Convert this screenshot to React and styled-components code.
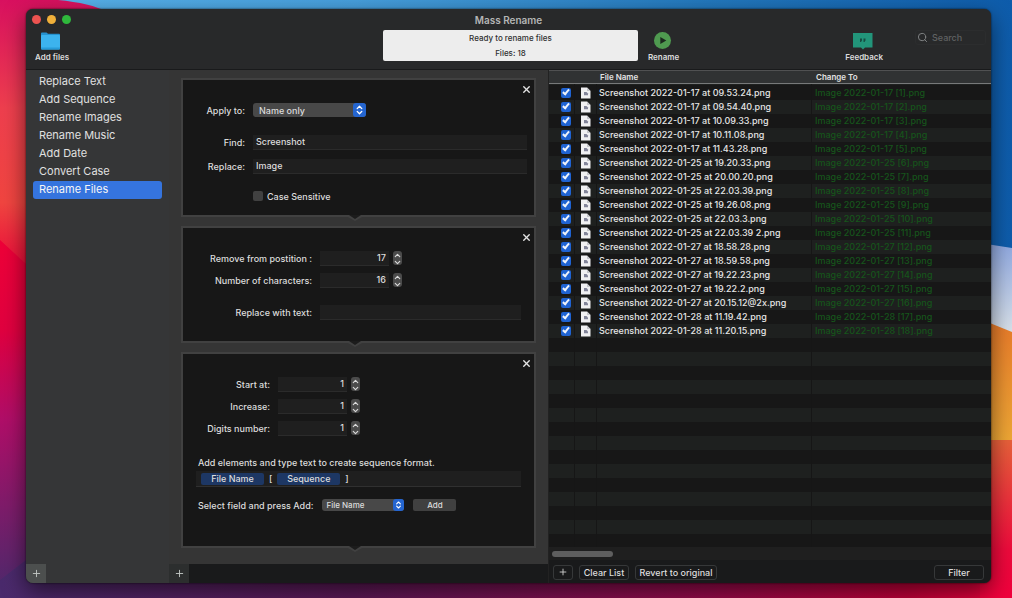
import React, { useState } from 'react';
import styled, { createGlobalStyle } from 'styled-components';
import { ChevronDown, ChevronUp, ChevronsUpDown, Plus, Search, X } from 'lucide-react';

const GlobalStyle = createGlobalStyle`
  * {
    box-sizing: border-box;
  }

  body {
    margin: 0;
    font-family: Inter, 'Liberation Sans', sans-serif;
    font-size: 9px;
    font-weight: 500;
    color: #dcdcdc;
  }

  button,
  input,
  select {
    margin: 0;
    padding: 0;
    border: 0;
    background: none;
    color: inherit;
    font: inherit;
  }
`;

const Desktop = styled.div`
  position: relative;
  display: flex;
  min-height: 100vh;
  padding: 9px 21px 15px 26px;
  overflow: hidden;
`;

const WallpaperSvg = styled.svg`
  position: absolute;
  inset: 0;
  width: 100%;
  height: 100%;
`;

const Window = styled.main`
  position: relative;
  flex: 1;
  min-width: 0;
  display: flex;
  flex-direction: column;
  border-radius: 7px;
  overflow: hidden;
  background: #353637;
  box-shadow: 0 0 2px rgba(0, 0, 0, 0.8), 0 8px 22px rgba(0, 0, 0, 0.55);
`;

const Header = styled.header`
  background: #28292a;
  border-bottom: 1px solid #191a1b;
`;

const TitleBar = styled.div`
  display: grid;
  grid-template-columns: 1fr auto 1fr;
  align-items: center;
  height: 21px;
  padding: 0 6px;
`;

const Lights = styled.div`
  display: flex;
  gap: 6px;
`;

const Light = styled.button`
  width: 9px;
  height: 9px;
  border-radius: 50%;
  background: ${props => props.color};
`;

const Title = styled.h1`
  margin: 0;
  font-size: 10px;
  font-weight: 600;
  color: #b4b5b5;
`;

const Toolbar = styled.div`
  display: grid;
  grid-template-columns: 1fr 255px 1fr;
  height: 39px;
  padding: 0 5px 0 9px;
`;

const Status = styled.div`
  height: 31px;
  padding-top: 1px;
  border-radius: 2px;
  background: #ededed;
  color: #303030;
  font-size: 8px;
  line-height: 15px;
  text-align: center;
`;

const ToolGroup = styled.div`
  display: flex;
  align-items: flex-start;
  padding-left: ${props => (props.$indent ? 10 : 0)}px;
`;

const ToolButton = styled.button`
  display: flex;
  flex-direction: column;
  align-items: center;
  margin-left: ${props => (props.$pushed ? 'auto' : 0)};
  font-size: 8px;
  font-weight: 600;
  line-height: 12px;
  white-space: nowrap;

  svg {
    width: 22px;
    height: 21px;
  }
`;

const SearchBox = styled.label`
  display: flex;
  align-items: center;
  gap: 4px;
  width: 71px;
  height: 15px;
  margin-left: 32px;
  padding-left: 1px;
  border: 1px solid #2c2d2e;
  border-radius: 3px;
  color: #87898a;

  svg {
    flex: none;
  }

  input {
    width: 100%;
    min-width: 0;
  }

  input::placeholder {
    color: #606263;
  }
`;

const Body = styled.div`
  flex: 1;
  display: grid;
  grid-template-columns: 143px 380px minmax(0, 1fr);
`;

const Sidebar = styled.nav`
  display: flex;
  flex-direction: column;
  justify-content: space-between;
  padding-top: 3px;
  background: #353637;
`;

const ModeList = styled.ul`
  margin: 0;
  padding: 0 7px;
  list-style: none;
`;

const ModeButton = styled.button`
  display: block;
  width: 100%;
  height: 18px;
  padding: 0 6px 1px;
  border-radius: 3px;
  background: ${props => (props.$active ? '#3574de' : 'transparent')};
  color: ${props => (props.$active ? '#f6f6f6' : '#e0e0e0')};
  font-size: 11px;
  font-weight: 400;
  line-height: 17px;
  text-align: left;
`;

const AddButton = styled.button`
  display: grid;
  place-items: center;
  width: 20px;
  height: 19px;
  background: ${props => (props.$dim ? '#2c2e2e' : '#4c4f4e')};
  color: #c2c6c3;
`;

const Steps = styled.section`
  display: flex;
  flex-direction: column;
  background: #353535;
  border-right: 1px solid #222;
`;

const StepList = styled.div`
  flex: 1;
  display: flex;
  flex-direction: column;
  gap: 9px;
  padding: 8px 12px 15px;
`;

const StepsFooter = styled.div`
  height: 19px;
  background: #191a1b;
`;

const CardBox = styled.div`
  position: relative;
  padding-bottom: ${props => props.$bottom}px;
  border: 2px solid #414141;
  background: #171717;
`;

const Notch = styled.svg`
  position: absolute;
  left: calc(50% - 15px);
  bottom: -6px;
  width: 22px;
  height: 6px;
`;

const CardHead = styled.div`
  display: flex;
  justify-content: flex-end;
  height: 22px;
  padding: 3px 1px;
`;

const CloseButton = styled.button`
  display: grid;
  place-items: center;
  width: 13px;
  height: 13px;
  color: #e4e4e4;
`;

const Row = styled.div`
  display: grid;
  grid-template-columns: ${props => props.$label}px minmax(0, 1fr);
  column-gap: 8px;
  align-items: center;
  height: 16px;
  margin-top: ${props => props.$gap || 0}px;
  padding-right: ${props => (props.$wide ? 7 : 13)}px;
`;

const Label = styled.label`
  text-align: right;
  white-space: nowrap;
`;

const Field = styled.input`
  width: ${props => (props.$short ? '69px' : '100%')};
  height: 15px;
  padding: 0 3px;
  background: #1f1f1f;
  border-bottom: 1px solid #2b2b2b;
  text-align: ${props => (props.$short ? 'right' : 'left')};
`;

const Controls = styled.div`
  display: flex;
  align-items: center;
  gap: 4px;
`;

const StepperBox = styled.span`
  display: flex;
  flex-direction: column;
  width: 9px;
  height: 14px;
  border-radius: 3px;
  background: #4b4b4b;

  button {
    display: grid;
    place-items: center;
    height: 7px;
  }
`;

const SelectBox = styled.span`
  display: grid;
  grid-template-columns: minmax(0, 1fr) auto;
  align-items: center;
  width: ${props => (props.$small ? 82 : 113)}px;
  height: ${props => (props.$small ? 12 : 14)}px;
  border-radius: 3px;
  background: #484848;
  font-size: ${props => (props.$small ? 8 : 9)}px;

  select {
    grid-area: 1 / 1 / 2 / 3;
    height: 100%;
    padding: 0 14px 0 ${props => (props.$small ? 4 : 6)}px;
    appearance: none;
  }

  svg {
    grid-area: 1 / 2;
    width: ${props => (props.$small ? 11 : 13)}px;
    height: 100%;
    padding: 1px;
    border-radius: 3px;
    background: #2465d0;
    color: #fff;
    pointer-events: none;
  }
`;

const TickLabel = styled.label`
  display: flex;
  align-items: center;
  gap: 4px;
`;

const Tick = styled.input`
  display: block;
  width: 10px;
  height: 10px;
  border-radius: 2px;
  background: #414141;
  appearance: none;

  &:checked {
    background: #1f63d2;
  }

  &:checked::after {
    content: '';
    display: block;
    width: 2px;
    height: 5px;
    margin-left: 3px;
    border: solid #eef3fb;
    border-width: 0 2px 2px 0;
    transform: rotate(40deg);
  }
`;

const Sequence = styled.div`
  margin-top: 19px;
  padding: 0 13px;
`;

const Hint = styled.div`
  padding-left: 2px;
  line-height: 16px;
`;

const TokenField = styled.div`
  display: flex;
  align-items: center;
  gap: 5px;
  height: 16px;
  padding: 0 5px;
  background: #1f1f1f;
  border-bottom: 1px solid #303030;
`;

const Token = styled.span`
  width: 63px;
  border-radius: 2px;
  background: #1d3764;
  line-height: 12px;
  text-align: center;
`;

const AddRow = styled.div`
  display: flex;
  align-items: center;
  gap: 9px;
  height: 16px;
  margin-top: 10px;
  padding-left: 2px;
`;

const SmallButton = styled.button`
  width: 43px;
  height: 12px;
  border-radius: 2px;
  background: #404040;
  font-size: 8px;
`;

const Files = styled.section`
  display: flex;
  flex-direction: column;
  min-width: 0;
  background: #191a1b;
`;

const List = styled.div`
  flex: 1;
  background:
    linear-gradient(#161616, #161616) 25px 0 / 1px 100% no-repeat,
    linear-gradient(#161616, #161616) 47px 0 / 1px 100% no-repeat,
    linear-gradient(#161616, #161616) 262px 0 / 1px 100% no-repeat,
    repeating-linear-gradient(#171717 0 14px, #1e201f 14px 28px) 0 16px;
`;

const Table = styled.table`
  width: 100%;
  table-layout: fixed;
  border-collapse: separate;
  border-spacing: 0;

  th {
    height: 14px;
    padding: 0 4px;
    border-top: 1px solid #505152;
    border-bottom: 1px solid #77797a;
    background: #303233;
    color: #e2e2e2;
    font-size: 8px;
    font-weight: 600;
    line-height: 12px;
    text-align: left;
  }

  td {
    height: 14px;
    padding: 0 3px;
    line-height: 14px;
    white-space: nowrap;
    overflow: hidden;
  }

  td:first-child {
    padding-left: 12px;
  }

  td:nth-child(2) {
    padding-left: 7px;
  }

  td svg {
    display: block;
  }

  tbody::before {
    content: '';
    display: block;
    height: 2px;
  }
`;

const NameCell = styled.td`
  color: ${props => (props.$renamed ? '#16541b' : '#e6e6e6')};
`;

const ScrollTrack = styled.div`
  height: 13px;
  padding: 4px 3px;
  background: #1f1f1f;
`;

const ScrollThumb = styled.div`
  width: 61px;
  height: 6px;
  border-radius: 3px;
  background: #5f5f5f;
`;

const FilesFooter = styled.footer`
  display: flex;
  align-items: center;
  gap: 6px;
  height: 23px;
  padding: 1px 7px 0 4px;
`;

const FooterButton = styled.button`
  display: grid;
  place-items: center;
  width: ${props => props.$width}px;
  height: 15px;
  margin-left: ${props => (props.$end ? 'auto' : 0)};
  border: 1px solid #363839;
  border-radius: 3px;
  white-space: nowrap;
`;

const modes = [
  'Replace Text',
  'Add Sequence',
  'Rename Images',
  'Rename Music',
  'Add Date',
  'Convert Case',
  'Rename Files',
];

const shots = [
  '2022-01-17 at 09.53.24',
  '2022-01-17 at 09.54.40',
  '2022-01-17 at 10.09.33',
  '2022-01-17 at 10.11.08',
  '2022-01-17 at 11.43.28',
  '2022-01-25 at 19.20.33',
  '2022-01-25 at 20.00.20',
  '2022-01-25 at 22.03.39',
  '2022-01-25 at 19.26.08',
  '2022-01-25 at 22.03.3',
  '2022-01-25 at 22.03.39 2',
  '2022-01-27 at 18.58.28',
  '2022-01-27 at 18.59.58',
  '2022-01-27 at 19.22.23',
  '2022-01-27 at 19.22.2',
  '2022-01-27 at 20.15.12@2x',
  '2022-01-28 at 11.19.42',
  '2022-01-28 at 11.20.15',
];

const Wallpaper = () => (
  <WallpaperSvg viewBox="0 0 1012 598" preserveAspectRatio="none" aria-hidden="true">
    <defs>
      <linearGradient id="sky" x1="0" x2="1">
        <stop offset="0" stopColor="#5ab4ec" />
        <stop offset="0.35" stopColor="#479fdc" />
        <stop offset="0.7" stopColor="#2378bd" />
        <stop offset="1" stopColor="#0e5cab" />
      </linearGradient>
      <linearGradient id="coral" x1="0" x2="0" y1="0" y2="1">
        <stop offset="0" stopColor="#d8105f" />
        <stop offset="0.4" stopColor="#ee3f4e" />
        <stop offset="0.75" stopColor="#f04540" />
        <stop offset="1" stopColor="#ea0a3a" />
      </linearGradient>
      <linearGradient id="berry" x1="0" x2="0" y1="0" y2="1">
        <stop offset="0" stopColor="#ee0038" />
        <stop offset="0.25" stopColor="#e0003f" />
        <stop offset="0.5" stopColor="#b00e68" />
        <stop offset="1" stopColor="#4a2a6c" />
      </linearGradient>
      <linearGradient id="floor" x1="0" x2="1">
        <stop offset="0" stopColor="#4a2a6c" />
        <stop offset="0.35" stopColor="#5c1856" />
        <stop offset="0.7" stopColor="#960a4a" />
        <stop offset="0.9" stopColor="#c00038" />
        <stop offset="1" stopColor="#f0003c" />
      </linearGradient>
      <linearGradient id="mist" x1="0" x2="0" y1="0" y2="1">
        <stop offset="0" stopColor="#8fa8e0" />
        <stop offset="1" stopColor="#dfe6ea" />
      </linearGradient>
      <linearGradient id="sand" x1="0" x2="0" y1="0" y2="1">
        <stop offset="0" stopColor="#e87a2a" />
        <stop offset="1" stopColor="#eeaa36" />
      </linearGradient>
      <linearGradient id="ember" x1="0" x2="0" y1="0" y2="1">
        <stop offset="0" stopColor="#e8613a" />
        <stop offset="0.7" stopColor="#ee0a3c" />
        <stop offset="1" stopColor="#f0003c" />
      </linearGradient>
    </defs>
    <rect width="1012" height="598" fill="url(#sky)" />
    <path d="M0 0H58Q90 3 108 12L200 270H0Z" fill="url(#coral)" />
    <path d="M0 240L26 264L60 290V598H0Z" fill="url(#berry)" />
    <path d="M26 560H1012V598H0V580Z" fill="url(#floor)" />
    <path d="M980 243L1012 248V340H980Z" fill="url(#mist)" />
    <path d="M980 319L1012 332V450H980Z" fill="url(#sand)" />
    <path d="M980 440H1012V598H980Z" fill="url(#ember)" />
  </WallpaperSvg>
);

const FolderIcon = () => (
  <svg viewBox="0 0 22 21" aria-hidden="true">
    <path d="M0 3.5Q0 2.500 1 2.500H5.500L7 3.700H18Q19 3.700 19 4.700V8H0Z" fill="#2592cf" />
    <rect x="0" y="5" width="19" height="14.500" rx="1" fill="#3cb3ee" />
    <path d="M0 17.500H19V18.500Q19 19.500 18 19.500H1Q0 19.500 0 18.500Z" fill="#279bd8" />
  </svg>
);

const PlayIcon = () => (
  <svg viewBox="0 0 22 21" aria-hidden="true">
    <circle cx="9.500" cy="10.500" r="8.500" fill="#4f9a50" />
    <path d="M7.300 7L13.300 10.500L7.300 14Z" fill="#1c2a1f" />
  </svg>
);

const FeedbackIcon = () => (
  <svg viewBox="0 0 22 21" aria-hidden="true">
    <path d="M0 3H19.500V17.500H12L10 19.500L8 17.500H0Z" fill="#22957a" />
    <path d="M7 8.500H9V10.500L8 12H7ZM10.500 8.500H12.500V10.500L11.500 12H10.500Z" fill="#174d43" />
  </svg>
);

const FileIcon = () => (
  <svg width="10" height="12" viewBox="0 0 10 12" aria-hidden="true">
    <path d="M0 0.500H6L9.500 4V11.500H0Z" fill="#f0f0f2" />
    <path d="M6 0.500V4H9.500Z" fill="#c4c5ca" />
    <path d="M3 5H5.500L7 6.500V8.300H3Z" fill="#83859a" />
  </svg>
);

const Card = ({ bottom, children }) => (
  <CardBox $bottom={bottom}>
    <CardHead>
      <CloseButton type="button" aria-label="Remove step">
        <X size={11} strokeWidth={3} />
      </CloseButton>
    </CardHead>
    {children}
    <Notch viewBox="0 0 22 6" aria-hidden="true">
      <path d="M0 0H22V2H18L11 6L4 2H0Z" fill="#414141" />
      <path d="M5 0H17L11 4Z" fill="#1c1c1c" />
    </Notch>
  </CardBox>
);

const NumberRow = ({ id, label, labelWidth, value, gap }) => {
  const [count, setCount] = useState(value);
  return (
    <Row $label={labelWidth} $gap={gap}>
      <Label htmlFor={id}>{label}</Label>
      <Controls>
        <Field
          $short
          id={id}
          inputMode="numeric"
          value={count}
          onChange={e => setCount(Number(e.target.value) || 0)}
        />
        <StepperBox>
          <button type="button" aria-label="Increase" onClick={() => setCount(count + 1)}>
            <ChevronUp size={9} strokeWidth={3} />
          </button>
          <button type="button" aria-label="Decrease" onClick={() => setCount(count - 1)}>
            <ChevronDown size={9} strokeWidth={3} />
          </button>
        </StepperBox>
      </Controls>
    </Row>
  );
};

export default function App() {
  const [mode, setMode] = useState('Rename Files');

  return (
    <Desktop>
      <GlobalStyle />
      <Wallpaper />
      <Window>
        <Header>
          <TitleBar>
            <Lights>
              <Light type="button" aria-label="Close" color="#ec5350" />
              <Light type="button" aria-label="Minimize" color="#f0b03a" />
              <Light type="button" aria-label="Zoom" color="#2fb83c" />
            </Lights>
            <Title>Mass Rename</Title>
          </TitleBar>
          <Toolbar>
            <ToolGroup>
              <ToolButton type="button">
                <FolderIcon />
                Add files
              </ToolButton>
            </ToolGroup>
            <Status>
              <div>Ready to rename files</div>
              <div>Files: 18</div>
            </Status>
            <ToolGroup $indent>
              <ToolButton type="button">
                <PlayIcon />
                Rename
              </ToolButton>
              <ToolButton type="button" $pushed>
                <FeedbackIcon />
                Feedback
              </ToolButton>
              <SearchBox>
                <Search size={11} />
                <input type="search" placeholder="Search" aria-label="Search" />
              </SearchBox>
            </ToolGroup>
          </Toolbar>
        </Header>
        <Body>
          <Sidebar>
            <ModeList>
              {modes.map(name => (
                <li key={name}>
                  <ModeButton type="button" $active={name === mode} onClick={() => setMode(name)}>
                    {name}
                  </ModeButton>
                </li>
              ))}
            </ModeList>
            <AddButton type="button" aria-label="Add preset">
              <Plus size={11} />
            </AddButton>
          </Sidebar>

          <Steps>
            <StepList>
              <Card bottom={11}>
                <Row $label={62} $wide>
                  <Label htmlFor="apply">Apply to:</Label>
                  <SelectBox>
                    <select id="apply">
                      <option>Name only</option>
                    </select>
                    <ChevronsUpDown strokeWidth={3} />
                  </SelectBox>
                </Row>
                <Row $label={62} $gap={16} $wide>
                  <Label htmlFor="find">Find:</Label>
                  <Field id="find" defaultValue="Screenshot" />
                </Row>
                <Row $label={62} $gap={8} $wide>
                  <Label htmlFor="replace">Replace:</Label>
                  <Field id="replace" defaultValue="Image" />
                </Row>
                <Row $label={62} $gap={14} $wide>
                  <span />
                  <TickLabel>
                    <Tick type="checkbox" />
                    Case Sensitive
                  </TickLabel>
                </Row>
              </Card>

              <Card bottom={21}>
                <NumberRow id="from" label="Remove from postition :" labelWidth={129} value={17} />
                <NumberRow id="chars" label="Number of characters:" labelWidth={129} value={16} gap={6} />
                <Row $label={129} $gap={16}>
                  <Label htmlFor="with">Replace with text:</Label>
                  <Field id="with" />
                </Row>
              </Card>

              <Card bottom={33}>
                <NumberRow id="start" label="Start at:" labelWidth={87} value={1} />
                <NumberRow id="increase" label="Increase:" labelWidth={87} value={1} gap={6} />
                <NumberRow id="digits" label="Digits number:" labelWidth={87} value={1} gap={6} />
                <Sequence>
                  <Hint>Add elements and type text to create sequence format.</Hint>
                  <TokenField>
                    <Token>File Name</Token>[<Token>Sequence</Token>]
                  </TokenField>
                  <AddRow>
                    <label htmlFor="element">Select field and press Add:</label>
                    <SelectBox $small>
                      <select id="element">
                        <option>File Name</option>
                      </select>
                      <ChevronsUpDown strokeWidth={3} />
                    </SelectBox>
                    <SmallButton type="button">Add</SmallButton>
                  </AddRow>
                </Sequence>
              </Card>
            </StepList>
            <StepsFooter>
              <AddButton $dim type="button" aria-label="Add step">
                <Plus size={11} />
              </AddButton>
            </StepsFooter>
          </Steps>

          <Files>
            <List>
              <Table>
                <colgroup>
                  <col width="25" />
                  <col width="22" />
                  <col width="216" />
                  <col />
                </colgroup>
                <thead>
                  <tr>
                    <th aria-label="Selected" />
                    <th aria-label="Kind" />
                    <th>File Name</th>
                    <th>Change To</th>
                  </tr>
                </thead>
                <tbody>
                  {shots.map((shot, i) => (
                    <tr key={shot}>
                      <td>
                        <Tick type="checkbox" defaultChecked aria-label={`Screenshot ${shot}.png`} />
                      </td>
                      <td>
                        <FileIcon />
                      </td>
                      <NameCell>Screenshot {shot}.png</NameCell>
                      <NameCell $renamed>
                        Image {shot.slice(0, 10)} [{i + 1}].png
                      </NameCell>
                    </tr>
                  ))}
                </tbody>
              </Table>
            </List>
            <ScrollTrack>
              <ScrollThumb />
            </ScrollTrack>
            <FilesFooter>
              <FooterButton type="button" $width={20} aria-label="Add">
                <Plus size={10} />
              </FooterButton>
              <FooterButton type="button" $width={50}>
                Clear List
              </FooterButton>
              <FooterButton type="button" $width={82}>
                Revert to original
              </FooterButton>
              <FooterButton type="button" $width={50} $end>
                Filter
              </FooterButton>
            </FilesFooter>
          </Files>
        </Body>
      </Window>
    </Desktop>
  );
}
